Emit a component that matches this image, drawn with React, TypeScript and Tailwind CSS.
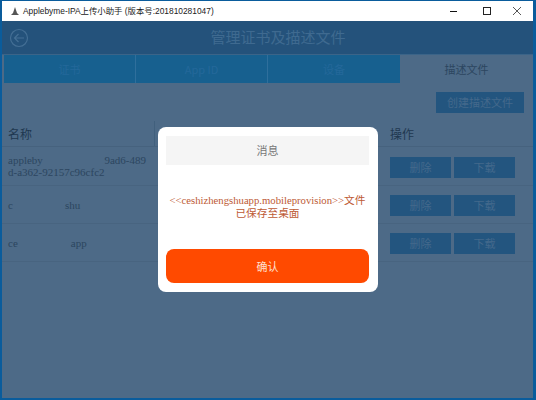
const serif = "font-['Liberation_Serif','Noto_Sans_CJK_SC',serif]";

function Row({ h, children }: { h: string; children: React.ReactNode }) {
  return (
    <div className={`flex ${h} border-b border-[#486480]`}>
      <div className={`w-[380px] pl-[6px] flex items-center text-[11px] leading-[12px] text-[#2c4660] ${serif}`}>
        {children}
      </div>
      <div className="flex items-center gap-[3px] pl-[8px] pt-[2px]">
        <button className="w-[61px] h-[21px] bg-[#23557f] text-[11px] text-[#44698c]">删除</button>
        <button className="w-[61px] h-[21px] bg-[#23557f] text-[11px] text-[#44698c]">下载</button>
      </div>
    </div>
  );
}

export default function App() {
  return (
    <div className="relative w-[536px] h-[400px] bg-[#0a5c9c] pt-px pl-[2px] pr-[3px] pb-[2px] overflow-hidden font-['Noto_Sans_CJK_SC',sans-serif]">
      <div className="h-full flex flex-col bg-[#4d6a87]">
        <div className="h-[20px] shrink-0 bg-white flex items-center pl-[8px] text-[#222]">
          <svg width="10" height="10" viewBox="0 0 10 10" className="mr-[3px]">
            <path d="M5 1 L7 7 L9 9 H1 L3 7 Z" fill="#555" />
          </svg>
          <span className="text-[8.4px] font-['Liberation_Sans','Noto_Sans_CJK_SC',sans-serif]">
            Applebyme-IPA上传小助手 (版本号:201810281047)
          </span>
          <div className="ml-auto flex items-center h-full text-[#222]">
            <svg width="10" height="10" viewBox="0 0 10 10" className="mr-[23px]">
              <path d="M1 5.5 H8" stroke="#111" strokeWidth="1" />
            </svg>
            <svg width="10" height="10" viewBox="0 0 10 10" className="mr-[20px]">
              <rect x="1.5" y="1.5" width="7" height="7" fill="none" stroke="#222" strokeWidth="1" />
            </svg>
            <svg width="10" height="10" viewBox="0 0 10 10" className="mr-[11px]">
              <path d="M1 1 L9 9 M9 1 L1 9" stroke="#444" strokeWidth="0.9" />
            </svg>
          </div>
        </div>

        <div className="h-[34px] shrink-0 bg-[#24527b] flex items-center border-b border-[#3b6488]">
          <svg width="20" height="20" viewBox="0 0 20 20" className="ml-[7px]" fill="none" stroke="#446f95" strokeWidth="1.2">
            <circle cx="10" cy="10" r="8.5" />
            <path d="M15 10 H5.5 M9.5 6 L5.5 10 L9.5 14" />
          </svg>
          <div className="flex-1 text-center text-[15px] text-[#3f6a90] pr-[6px]">管理证书及描述文件</div>
        </div>

        <div className="h-[28px] shrink-0 flex pl-[2px] text-[11px] text-[#24689a]">
          <div className="w-[132px] bg-[#17608f] border-r border-[#2f6f9c] flex items-center justify-center">证书</div>
          <div className="w-[132px] bg-[#17608f] border-r border-[#2f6f9c] flex items-center justify-center">App ID</div>
          <div className="w-[132px] bg-[#17608f] flex items-center justify-center">设备</div>
          <div className="flex-1 flex items-center justify-center text-[#2c4660]">描述文件</div>
        </div>

        <div className="h-[38px] shrink-0 flex items-center justify-end pr-[9px]">
          <button className="w-[88px] h-[21px] bg-[#23557f] text-[11px] text-[#44698c]">创建描述文件</button>
        </div>

        <div className="flex flex-col">
          <div className="flex h-[26px] border-b border-[#46627e] text-[12px] text-[#1f3850]">
            <div className="w-[153px] pl-[6px] border-r border-[#41607d] flex items-center">名称</div>
            <div className="w-[227px]" />
            <div className="pl-[8px] flex items-center">操作</div>
          </div>
          <Row h="h-[39px]">
            <div className="w-[138px]">
              <div className="flex justify-between"><span>appleby</span><span>9ad6-489</span></div>
              <div>d-a362-92157c96cfc2</div>
            </div>
          </Row>
          <Row h="h-[38px]">
            <span className="pr-[52px]">c</span><span>shu</span>
          </Row>
          <Row h="h-[38px]">
            <span className="pr-[53px]">ce</span><span>app</span>
          </Row>
        </div>
      </div>

      <div className="absolute left-[158px] top-[127px] w-[220px] h-[165px] bg-white rounded-[8px] pt-[9px] px-[8px] flex flex-col">
        <div className="h-[29px] w-[203px] bg-[#f5f5f5] flex items-center justify-center text-[11px] text-[#777]">消息</div>
        <div className={`h-[84px] w-[203px] flex items-center justify-center text-center text-[10.7px] leading-[13px] text-[#bd5a35] ${serif}`}>
          <div className="w-[203px]">&lt;&lt;ceshizhengshuapp.mobileprovision&gt;&gt;文件<br />已保存至桌面</div>
        </div>
        <button className="h-[34px] w-[203px] bg-[#ff4a00] rounded-[8px] text-[11px] text-[#ffe0d0]">确认</button>
      </div>
    </div>
  );
}
